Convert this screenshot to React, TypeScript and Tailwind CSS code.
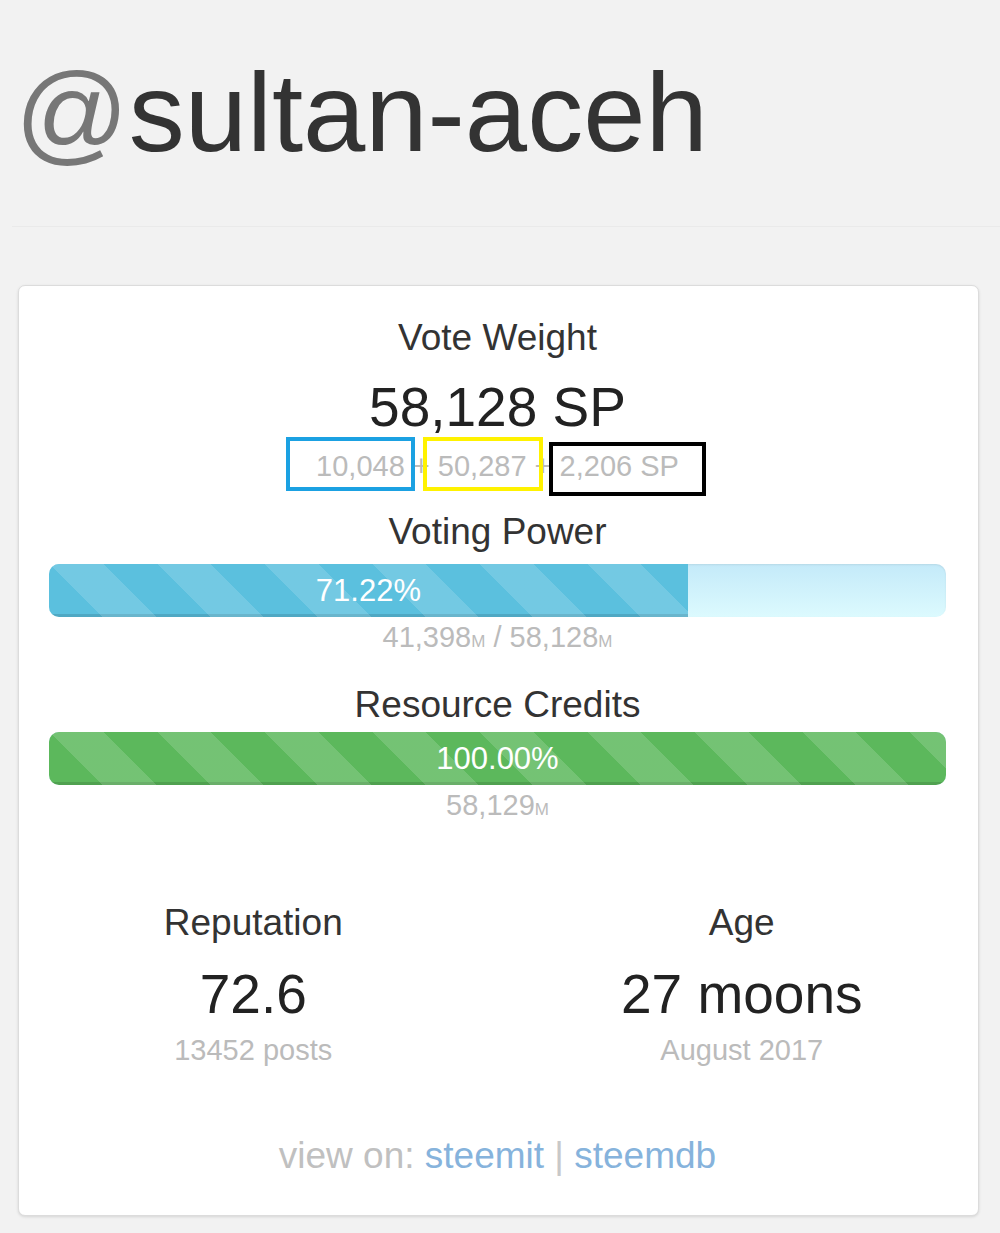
import React from "react";

const font = { fontFamily: '"Liberation Sans", Arial, Helvetica, sans-serif' };

function Bar({
  pct,
  label,
  color,
}: {
  pct: number;
  label: string;
  color: "blue" | "green";
}) {
  const fill =
    color === "blue"
      ? "bg-[#5bc0de]"
      : "bg-[#5cb85c]";
  return (
    <div className="relative h-[53px] w-full overflow-hidden rounded-[10px] bg-gradient-to-b from-[#c4eaf9] to-[#dcfafe] shadow-[inset_0_1px_2px_rgba(0,0,0,0.08)]">
      <div
        className={`relative h-full ${fill} shadow-[inset_0_-3px_0_rgba(0,0,0,0.12)]`}
        style={{ width: `${pct}%` }}
      >
        <div className="absolute inset-0 bg-[repeating-linear-gradient(45deg,transparent_0_38px,rgba(255,255,255,0.15)_38px_76px)]" />
        <div className="relative flex h-full items-center justify-center text-[31px] leading-none text-white">
          {label}
        </div>
      </div>
    </div>
  );
}

function Small({ children }: { children: React.ReactNode }) {
  return <span className="text-[17px]">{children}</span>;
}

export default function App() {
  return (
    <div className="min-h-[1233px] w-[1000px] bg-[#f2f2f2] pb-[16px]" style={font}>
      <div className="ml-[12px] border-b border-[#eaeaea] pt-[57px] pb-[57px]">
        <h1 className="ml-[3px] text-[112px] leading-none font-normal text-[#333333]">
          <span className="text-[#777777]">@</span>sultan-aceh
        </h1>
      </div>

      <div className="ml-[18px] mt-[58px] w-[961px] rounded-[7px] border border-[#dcdcdc] bg-white pl-[30px] pr-[32px] pt-[33px] pb-[41px] text-center shadow-[0_1px_3px_rgba(0,0,0,0.12)]">
        <div className="text-[37px] leading-none text-[#333333]">Vote Weight</div>
        <div className="mt-[24px] text-[55px] leading-none text-[#222222]">58,128 SP</div>
        <div className="relative mt-[17px] text-[29px] leading-none text-[#bbbbbb]">
          10,048 + 50,287 + 2,206 SP
          <div className="absolute left-[237px] top-[-15px] h-[54px] w-[129px] border-4 border-[#1ba1e2]" />
          <div className="absolute left-[374px] top-[-15px] h-[54px] w-[120px] border-4 border-[#fff200]" />
          <div className="absolute left-[500px] top-[-10px] h-[54px] w-[157px] border-4 border-black" />
        </div>

        <div className="mt-[32px] text-[37px] leading-none text-[#333333]">Voting Power</div>
        <div className="mt-[14px]">
          <Bar pct={71.22} label="71.22%" color="blue" />
        </div>
        <div className="mt-[6px] text-[29px] leading-none text-[#bbbbbb]">
          41,398<Small>M</Small> / 58,128<Small>M</Small>
        </div>

        <div className="mt-[34px] text-[37px] leading-none text-[#333333]">Resource Credits</div>
        <div className="mt-[9px]">
          <Bar pct={100} label="100.00%" color="green" />
        </div>
        <div className="mt-[6px] text-[29px] leading-none text-[#bbbbbb]">
          58,129<Small>M</Small>
        </div>

        <div className="mx-[-40px] mt-[84px] grid grid-cols-2">
          <div className="flex flex-col items-center">
            <div className="text-[37px] leading-none text-[#333333]">Reputation</div>
            <div className="mt-[26px] text-[55px] leading-none text-[#222222]">72.6</div>
            <div className="mt-[14px] text-[29px] leading-none text-[#bbbbbb]">13452 posts</div>
          </div>
          <div className="flex flex-col items-center">
            <div className="text-[37px] leading-none text-[#333333]">Age</div>
            <div className="mt-[26px] text-[55px] leading-none text-[#222222]">27 moons</div>
            <div className="mt-[14px] text-[29px] leading-none text-[#bbbbbb]">August 2017</div>
          </div>
        </div>

        <div className="mt-[72px] text-[37px] leading-none text-[#c0c0c0]">
          view on: <span className="text-[#86b3dc]">steemit</span>{" "}
          <span className="text-[#c8c8c8]">|</span>{" "}
          <span className="text-[#86b3dc]">steemdb</span>
        </div>
      </div>
    </div>
  );
}
